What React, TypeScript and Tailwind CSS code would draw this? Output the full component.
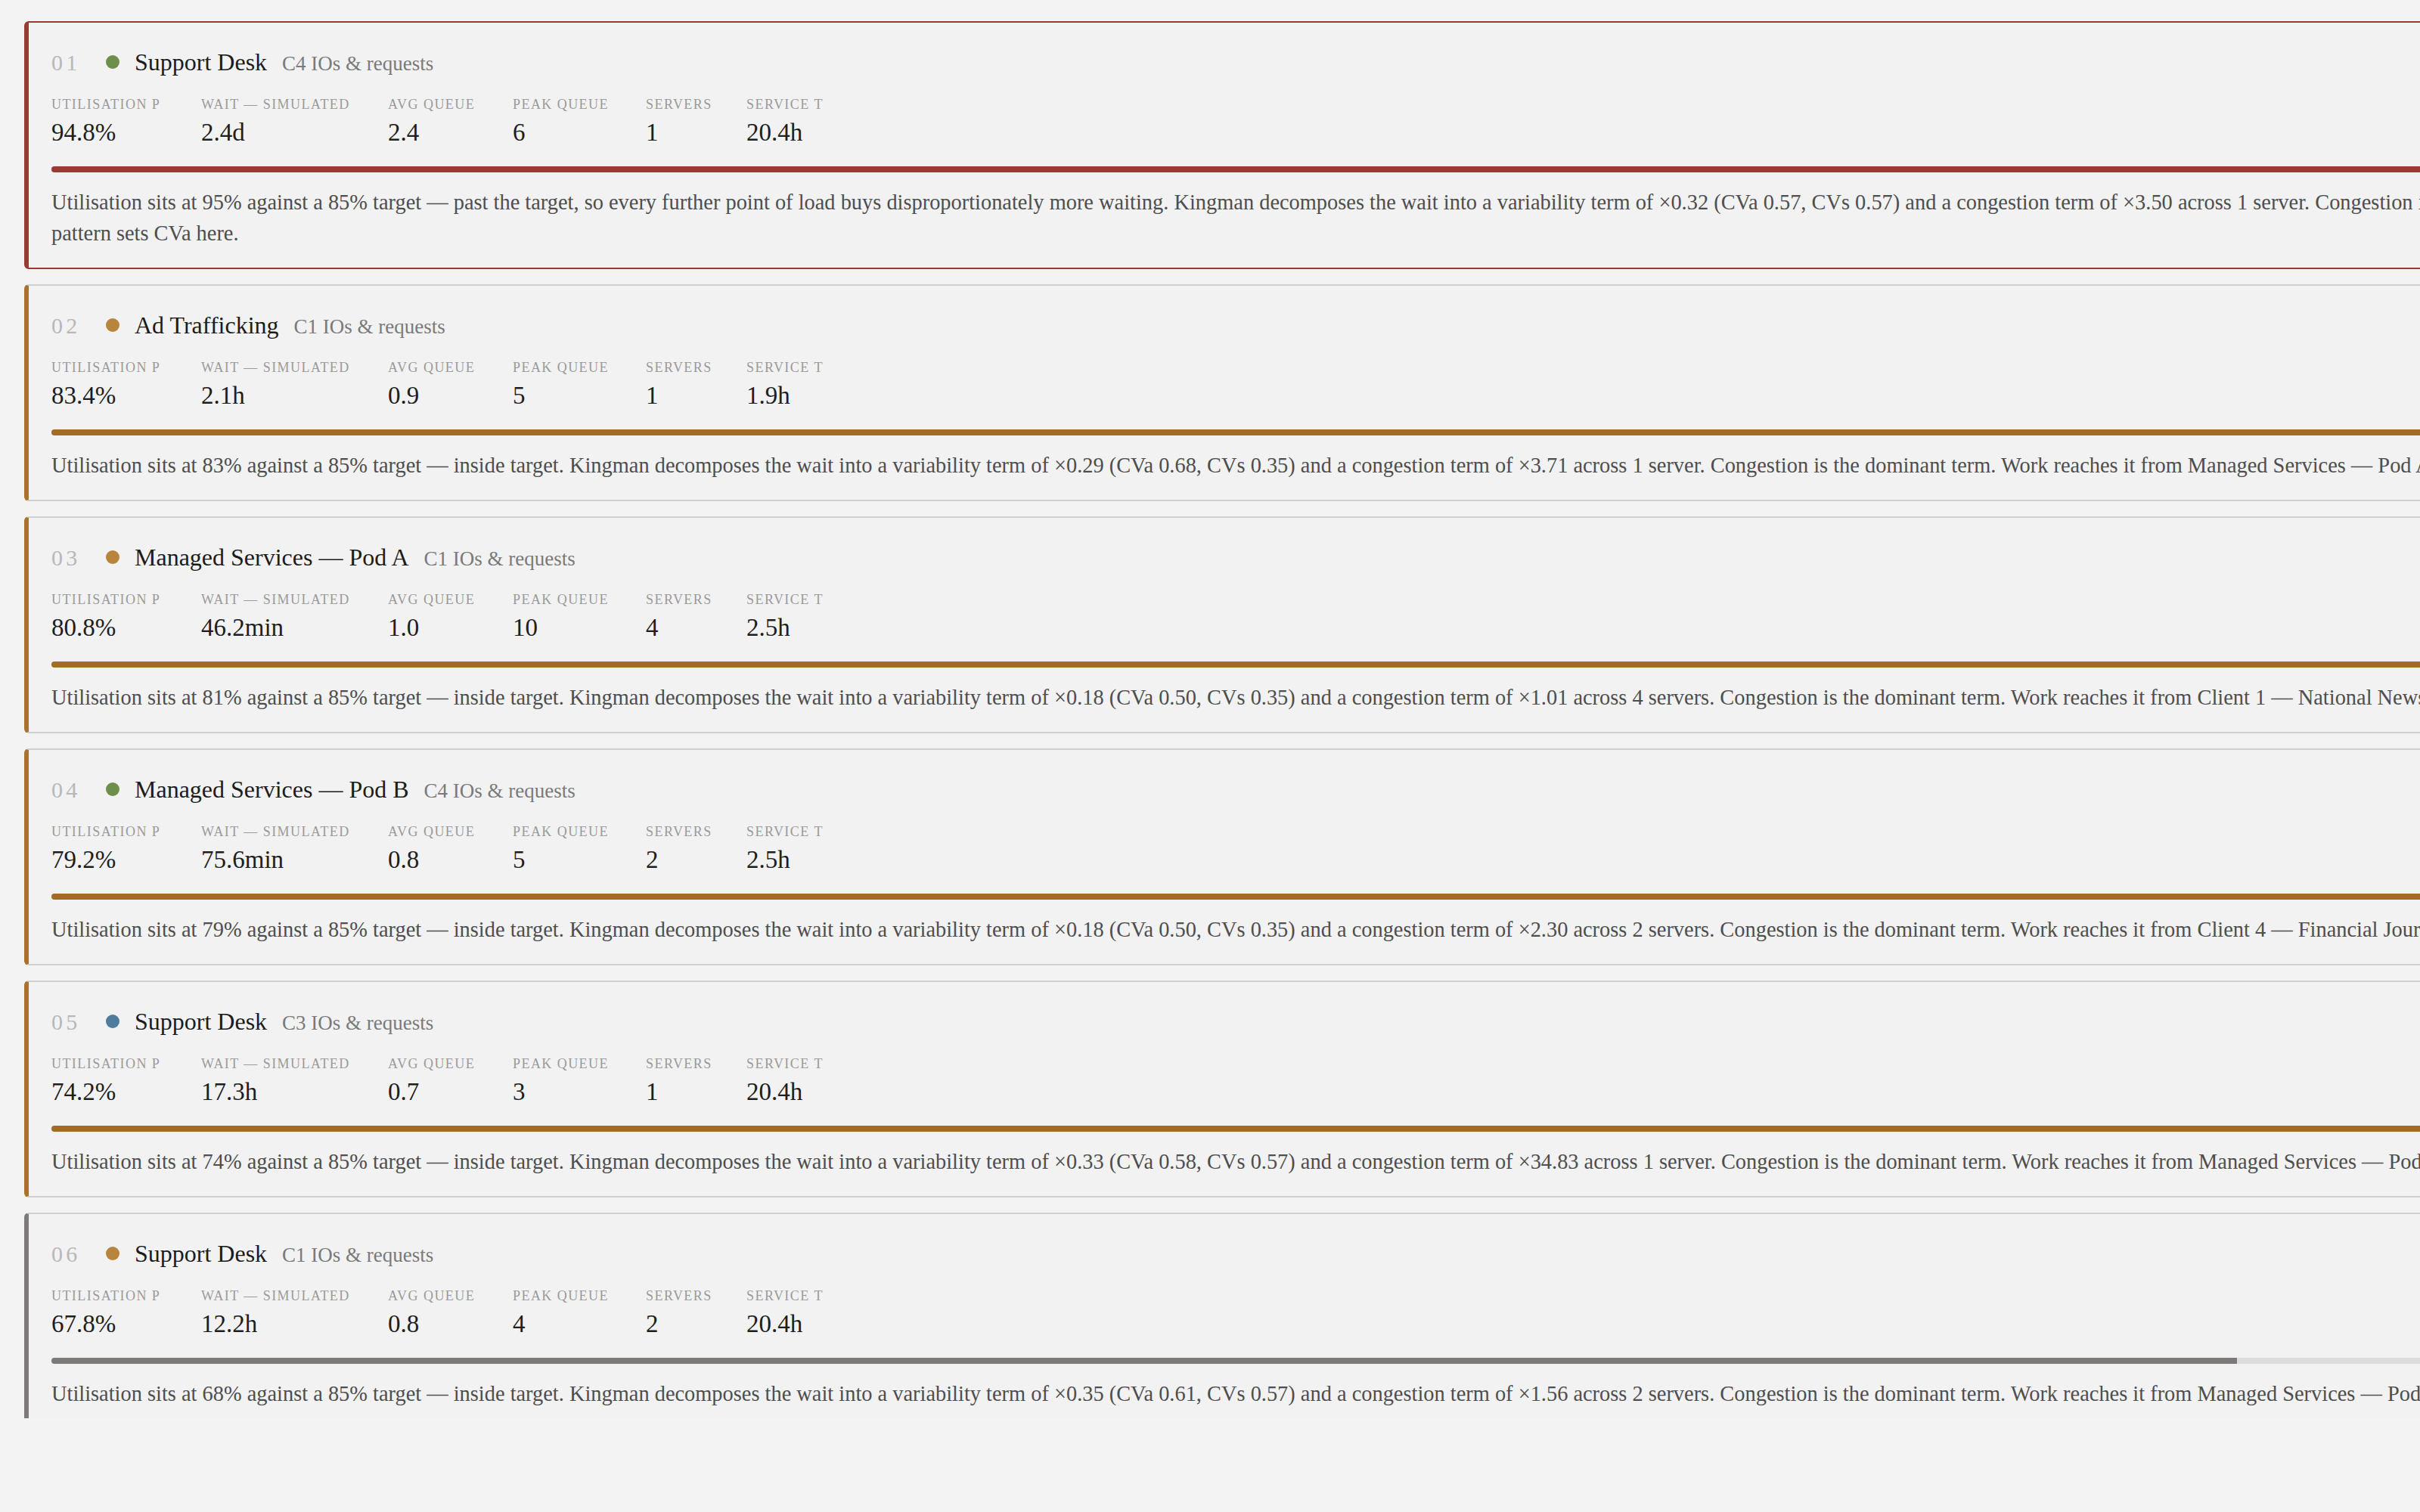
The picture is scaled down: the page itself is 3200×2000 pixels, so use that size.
import React from 'react'

type Tone = 'red' | 'amber' | 'gray'
type Dot = 'green' | 'amber' | 'blue'

type Station = {
  no: string
  dot: Dot
  name: string
  tag: string
  util: number
  wait: string
  avgQ: string
  peakQ: string
  servers: string
  service: string
  tone: Tone
  note: string
}

const stations: Station[] = [
  {
    no: '01',
    dot: 'green',
    name: 'Support Desk',
    tag: 'C4 IOs & requests',
    util: 94.8,
    wait: '2.4d',
    avgQ: '2.4',
    peakQ: '6',
    servers: '1',
    service: '20.4h',
    tone: 'red',
    // keep the closing clause together so it wraps as one piece
    note: 'Utilisation sits at 95% against a 85% target — past the target, so every further point of load buys disproportionately more waiting. Kingman decomposes the wait into a variability term of ×0.32 (CVa 0.57, CVs 0.57) and a congestion term of ×3.50 across 1 server. Congestion is the dominant term. Work reaches it from Client 4 — Financial Journal, whose arrival pattern\u00a0sets\u00a0CVa\u00a0here.',
  },
  {
    no: '02',
    dot: 'amber',
    name: 'Ad Trafficking',
    tag: 'C1 IOs & requests',
    util: 83.4,
    wait: '2.1h',
    avgQ: '0.9',
    peakQ: '5',
    servers: '1',
    service: '1.9h',
    tone: 'amber',
    note: 'Utilisation sits at 83% against a 85% target — inside target. Kingman decomposes the wait into a variability term of ×0.29 (CVa 0.68, CVs 0.35) and a congestion term of ×3.71 across 1 server. Congestion is the dominant term. Work reaches it from Managed Services — Pod A, whose arrival pattern sets CVa here.',
  },
  {
    no: '03',
    dot: 'amber',
    name: 'Managed Services — Pod A',
    tag: 'C1 IOs & requests',
    util: 80.8,
    wait: '46.2min',
    avgQ: '1.0',
    peakQ: '10',
    servers: '4',
    service: '2.5h',
    tone: 'amber',
    note: 'Utilisation sits at 81% against a 85% target — inside target. Kingman decomposes the wait into a variability term of ×0.18 (CVa 0.50, CVs 0.35) and a congestion term of ×1.01 across 4 servers. Congestion is the dominant term. Work reaches it from Client 1 — National News Group, whose arrival pattern sets CVa here.',
  },
  {
    no: '04',
    dot: 'green',
    name: 'Managed Services — Pod B',
    tag: 'C4 IOs & requests',
    util: 79.2,
    wait: '75.6min',
    avgQ: '0.8',
    peakQ: '5',
    servers: '2',
    service: '2.5h',
    tone: 'amber',
    note: 'Utilisation sits at 79% against a 85% target — inside target. Kingman decomposes the wait into a variability term of ×0.18 (CVa 0.50, CVs 0.35) and a congestion term of ×2.30 across 2 servers. Congestion is the dominant term. Work reaches it from Client 4 — Financial Journal, whose arrival pattern sets CVa here.',
  },
  {
    no: '05',
    dot: 'blue',
    name: 'Support Desk',
    tag: 'C3 IOs & requests',
    util: 74.2,
    wait: '17.3h',
    avgQ: '0.7',
    peakQ: '3',
    servers: '1',
    service: '20.4h',
    tone: 'amber',
    note: 'Utilisation sits at 74% against a 85% target — inside target. Kingman decomposes the wait into a variability term of ×0.33 (CVa 0.58, CVs 0.57) and a congestion term of ×34.83 across 1 server. Congestion is the dominant term. Work reaches it from Managed Services — Pod B, whose arrival pattern sets CVa here.',
  },
  {
    no: '06',
    dot: 'amber',
    name: 'Support Desk',
    tag: 'C1 IOs & requests',
    util: 67.8,
    wait: '12.2h',
    avgQ: '0.8',
    peakQ: '4',
    servers: '2',
    service: '20.4h',
    tone: 'gray',
    note: 'Utilisation sits at 68% against a 85% target — inside target. Kingman decomposes the wait into a variability term of ×0.35 (CVa 0.61, CVs 0.57) and a congestion term of ×1.56 across 2 servers. Congestion is the dominant term. Work reaches it from Managed Services — Pod A, whose arrival pattern sets CVa here.',
  },
]

const cardTone: Record<Tone, string> = {
  red: 'border-[#9a3b33] border-l-[#9a3b33]',
  amber: 'border-[#d0d0d0] border-l-[#a8732a]',
  gray: 'border-[#d0d0d0] border-l-[#7f7a7a]',
}

const barTone: Record<Tone, string> = {
  red: 'bg-[#9a3b33]',
  amber: 'bg-[#a36c25]',
  gray: 'bg-[#7f7a7a]',
}

const dotTone: Record<Dot, string> = {
  green: 'bg-[#6d8f4a]',
  amber: 'bg-[#b9843b]',
  blue: 'bg-[#4d7c9c]',
}

const Metric: React.FC<{ label: string; value: string }> = ({ label, value }) => (
  <div className="flex flex-col">
    <div className="text-[18px] leading-none uppercase tracking-[0.08em] text-[#9a9a9a] whitespace-nowrap">
      {label}
    </div>
    <div className="mt-[12px] text-[33px] leading-none text-[#1e1e1e] whitespace-nowrap">{value}</div>
  </div>
)

const StationCard: React.FC<{ s: Station }> = ({ s }) => (
  <div
    className={`w-[4330px] shrink-0 rounded-[6px] border-2 border-l-[6px] bg-[#f2f2f2] pl-[30px] pr-[30px] pt-[32px] pb-[25px] ${cardTone[s.tone]}`}
  >
    <div className="flex h-[40px] items-baseline gap-[20px] leading-[40px]">
      <span className="w-[52px] text-[30px] tracking-[0.14em] text-[#b8b8b8]">{s.no}</span>
      <span className={`h-[18px] w-[18px] self-center rounded-full ${dotTone[s.dot]}`} />
      <span className="text-[32px] text-[#1c1c1c] whitespace-nowrap">{s.name}</span>
      <span className="text-[27px] text-[#7a7a7a] whitespace-nowrap">{s.tag}</span>
    </div>

    <div className="mt-[27px] grid grid-cols-[198px_247px_165px_176px_133px_200px]">
      <Metric label="Utilisation ρ" value={`${s.util.toFixed(1)}%`} />
      <Metric label="Wait — simulated" value={s.wait} />
      <Metric label="Avg queue" value={s.avgQ} />
      <Metric label="Peak queue" value={s.peakQ} />
      <Metric label="Servers" value={s.servers} />
      <Metric label="Service τ" value={s.service} />
    </div>

    <div className="mt-[28px] h-[8px] w-full overflow-hidden rounded-full bg-[#dcdcdc]">
      <div className={`h-full ${barTone[s.tone]}`} style={{ width: `${s.util}%` }} />
    </div>

    <p className="mt-[19px] text-[28.4px] leading-[41px] text-[#4e4e4e]">{s.note}</p>
  </div>
)

export default function App() {
  return (
    <div
      className="h-screen w-screen overflow-hidden bg-[#f3f3f3] pl-[32px] pt-[28px]"
      style={{ fontFamily: '"Liberation Serif", "DejaVu Serif", serif' }}
    >
      <div className="flex h-[1848px] flex-col gap-[20px] overflow-hidden">
        {stations.map((s) => (
          <StationCard key={s.no} s={s} />
        ))}
      </div>
    </div>
  )
}
